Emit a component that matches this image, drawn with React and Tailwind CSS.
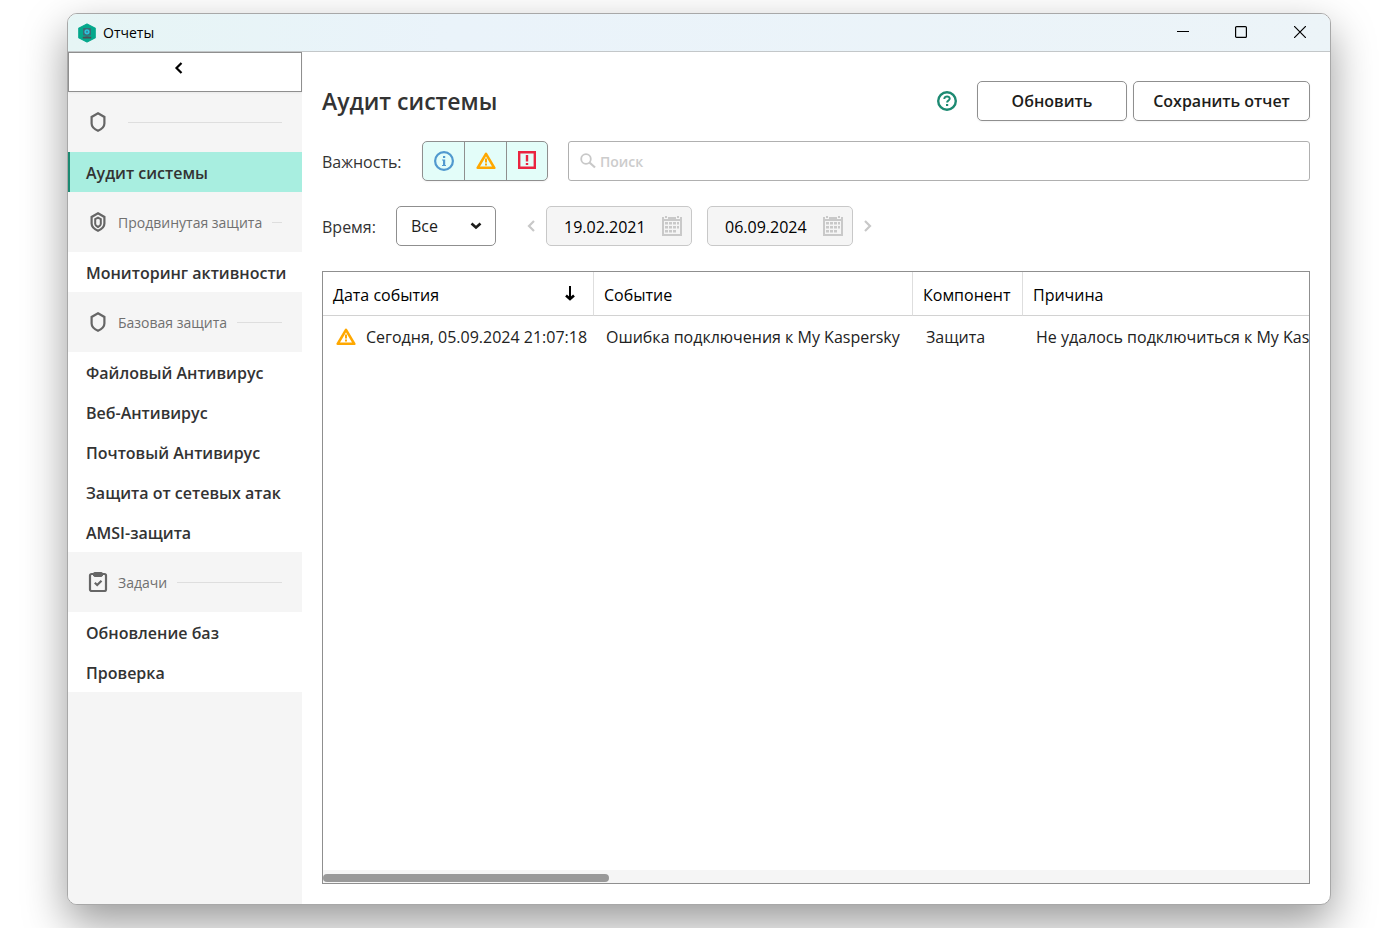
import { useState } from 'react'

const sections = [
  { icon: 'shield', title: '', items: ['Аудит системы'] },
  { icon: 'advanced', title: 'Продвинутая защита', items: ['Мониторинг активности'] },
  {
    icon: 'shield',
    title: 'Базовая защита',
    items: ['Файловый Антивирус', 'Веб-Антивирус', 'Почтовый Антивирус', 'Защита от сетевых атак', 'AMSI-защита'],
  },
  { icon: 'tasks', title: 'Задачи', items: ['Обновление баз', 'Проверка'] },
]

const events = [
  {
    date: 'Сегодня, 05.09.2024 21:07:18',
    event: 'Ошибка подключения к My Kaspersky',
    component: 'Защита',
    reason: 'Не удалось подключиться к My Kaspersky',
  },
]

function LogoIcon() {
  return (
    <svg width="20" height="20" viewBox="0 0 20 20" aria-hidden="true">
      <path d="M10 1 18.200 5.300v9.400L10 19l-8.200-4.300V5.300z" fill="#05a88c" stroke="#05a88c" strokeWidth="1.200" strokeLinejoin="round" />
      <rect x="6" y="5" width="8" height="7.500" rx="1" fill="#3c6b74" />
      <circle cx="10" cy="8.800" r="2.600" fill="#2cc5dc" />
      <circle cx="10" cy="8.800" r="1.100" fill="#3f7f95" />
      <path d="M8.500 12.500h3v1.200h-3z" fill="#3c6b74" />
      <path d="M5.800 13.700h8.400v1.800H5.800z" fill="#4d4f57" />
    </svg>
  )
}

function SectionIcon({ type }) {
  if (type === 'tasks') {
    return (
      <svg width="20" height="20" viewBox="0 0 20 20" fill="none" stroke="#666" className="shrink-0" aria-hidden="true">
        <rect x="2" y="2" width="16" height="17" rx="1.500" strokeWidth="2.200" />
        <path d="M5 1 6.500 0h7L15 1v2.500L13.500 5h-7L5 3.500z" fill="#666" stroke="none" />
        <path d="m6.800 10.800 2.400 2.200 4.300-4.200" strokeWidth="2.200" />
      </svg>
    )
  }
  return (
    <svg width="20" height="20" viewBox="0 0 20 20" fill="none" stroke="#666" className="shrink-0" aria-hidden="true">
      <path d="M10 1.300 16.400 5v6.500c0 3.300-2.600 5.600-6.400 7.300-3.800-1.700-6.400-4-6.400-7.300V5z" strokeWidth="2.200" />
      {type === 'advanced' && (
        <path d="M10 5.600 12.800 7.200v4.800c0 1.300-1.200 2.200-2.800 3-1.600-.8-2.800-1.700-2.800-3V7.200z" strokeWidth="2" />
      )}
    </svg>
  )
}

function InfoIcon() {
  return (
    <svg width="20" height="20" viewBox="0 0 20 20" fill="none" className="shrink-0" aria-hidden="true">
      <circle cx="10" cy="10" r="8.900" stroke="#5199cf" strokeWidth="2.200" />
      <path d="M9 5h2.200v2H9zM8 8.500h3.200V14H12v1H8v-1h1V9.500H8z" fill="#5199cf" />
    </svg>
  )
}

function WarningIcon() {
  return (
    <svg width="20" height="18" viewBox="0 0 20 18" fill="none" className="shrink-0" aria-hidden="true">
      <path d="M10 1.800 18.300 15.800H1.700z" stroke="#ffa800" strokeWidth="2.600" strokeLinejoin="round" />
      <path d="M9 6.500h2v4H9zM9 11.500h2v2H9z" fill="#ffa800" />
    </svg>
  )
}

function CriticalIcon() {
  return (
    <svg width="18" height="18" viewBox="0 0 18 18" fill="none" className="shrink-0" aria-hidden="true">
      <path d="M1.200 1.200h15.600v15.600H1.200z" stroke="#ea2440" strokeWidth="2.400" />
      <path d="M7.800 4h2.400v6.500H7.800zM7.800 12h2.400v2H7.800z" fill="#ea2440" />
    </svg>
  )
}

function CalendarIcon() {
  return (
    <svg width="20" height="20" viewBox="0 0 20 20" aria-hidden="true">
      <path d="M0 1h20v19H0z" fill="#c9c9c9" />
      <path d="M2 5h16v13H2z" fill="#f5f5f5" />
      <path d="M2 0h4v3H2zM14 0h4v3h-4z" fill="#f5f5f5" />
      <path d="M3 0h2v2H3zM15 0h2v2h-2z" fill="#c9c9c9" />
      <path
        d="M3 6h3v2.500H3zM7 6h3v2.500H7zM11 6h3v2.500h-3zM15 6h2v2.500h-2zM3 10h3v2.500H3zM7 10h3v2.500H7zM11 10h3v2.500h-3zM15 10h2v2.500h-2zM3 14h3v2.500H3zM7 14h3v2.500H7zM11 14h3v2.500h-3z"
        fill="#c9c9c9"
      />
    </svg>
  )
}

function Chevron({ d, className }) {
  return (
    <svg width="12" height="12" viewBox="0 0 12 12" fill="none" stroke="currentColor" strokeWidth="2.200" className={className} aria-hidden="true">
      <path d={d} />
    </svg>
  )
}

function DateField({ label, value }) {
  return (
    <div className="flex h-10 w-[146px] items-center rounded-[5px] border border-[#c8c8c8] bg-[#f5f5f5] pr-[9px] pl-[17px]">
      <input aria-label={label} defaultValue={value} className="w-0 flex-1 bg-transparent pt-0.5 text-base text-black outline-none" />
      <button aria-label="Открыть календарь" className="shrink-0">
        <CalendarIcon />
      </button>
    </div>
  )
}

function TitleBar() {
  return (
    <header className="flex h-[38px] shrink-0 items-center border-b border-[#c3c7c9] bg-gradient-to-r from-[#e6f5f5] via-[#eaf3fa] via-30% to-[#ecf4f8] pl-[9px]">
      <LogoIcon />
      <span className="ml-1.5 flex-1 text-sm text-black">Отчеты</span>
      <button aria-label="Свернуть" className="flex h-full w-[58px] items-center justify-center pb-0.5">
        <svg width="12" height="12" viewBox="0 0 12 12" stroke="#000"><path d="M0 5.500h12" /></svg>
      </button>
      <button aria-label="Развернуть" className="flex h-full w-[58px] items-center justify-center pb-0.5">
        <svg width="12" height="12" viewBox="0 0 12 12" fill="none" stroke="#000"><rect x=".6" y=".6" width="10.800" height="10.800" rx="1" strokeWidth="1.200" /></svg>
      </button>
      <button aria-label="Закрыть" className="flex h-full w-[60px] items-center justify-center pb-0.5">
        <svg width="12" height="12" viewBox="0 0 12 12" stroke="#000" strokeWidth="1.200"><path d="m0 0 12 12M12 0 0 12" /></svg>
      </button>
    </header>
  )
}

function Sidebar({ active, onSelect }) {
  return (
    <aside className="w-[234px] shrink-0 bg-[#f5f5f5]">
      <button aria-label="Свернуть меню" className="flex h-10 w-full items-start justify-center border border-[#8f8f8f] bg-white pt-[9px] pr-3 shadow-xs">
        <Chevron d="M8.500 1 3.500 6l5 5" className="text-black" />
      </button>
      <nav>
        {sections.map((section, i) => (
          <div key={i}>
            <div className="flex h-[60px] items-center gap-2.5 pr-5 pl-5">
              <SectionIcon type={section.icon} />
              <h2 className="pt-0.5 text-sm text-[#707070]">{section.title}</h2>
              <div className="h-px flex-1 bg-[#dedede]" />
            </div>
            {section.items.map((item) => (
              <button
                key={item}
                onClick={() => onSelect(item)}
                className={`flex h-10 w-full items-center border-l-2 pt-0.5 pl-4 text-base font-semibold whitespace-nowrap text-[#333] ${
                  active === item ? 'border-[#1d8a72] bg-[#a8eee0]' : 'border-white bg-white'
                }`}
              >
                {item}
              </button>
            ))}
          </div>
        ))}
      </nav>
    </aside>
  )
}

function EventsTable() {
  const th = 'border-b border-[#d2d2d2] pt-0.5 pl-2.5 text-left font-normal text-black'
  return (
    <div className="mt-[25px] flex min-h-0 flex-1 flex-col overflow-hidden border border-[#8f8f8f]">
      <div className="min-h-0 flex-1 overflow-hidden">
        <table className="w-[1400px] table-fixed border-separate border-spacing-0 text-base whitespace-nowrap">
          <colgroup>
            <col className="w-[271px]" />
            <col className="w-[319px]" />
            <col className="w-[110px]" />
            <col />
          </colgroup>
          <thead>
            <tr className="h-11">
              <th className={`${th} border-r border-r-[#dedede]`}>
                <div className="flex items-center justify-between pr-[17px]">
                  Дата события
                  <svg width="12" height="18" viewBox="0 0 12 18" fill="none" stroke="#000" aria-hidden="true">
                    <path d="M6 0v13" strokeWidth="2" />
                    <path d="M2 9.500 6 13l4-3.500" strokeWidth="2.600" />
                  </svg>
                </div>
              </th>
              <th className={`${th} border-r border-r-[#dedede]`}>Событие</th>
              <th className={`${th} border-r border-r-[#dedede]`}>Компонент</th>
              <th className={th}>Причина</th>
            </tr>
          </thead>
          <tbody>
            {events.map((row) => (
              <tr key={row.date} className="h-[42px] text-[#222]">
                <td className="pl-[13px]">
                  <div className="flex items-center gap-2.5">
                    <WarningIcon />
                    {row.date}
                  </div>
                </td>
                <td className="pl-3">{row.event}</td>
                <td className="pl-[13px]">{row.component}</td>
                <td className="pl-[13px]">{row.reason}</td>
              </tr>
            ))}
          </tbody>
        </table>
      </div>
      <div className="h-[13px] shrink-0 bg-[#f5f5f5] pt-1">
        <div className="h-2 w-[29%] rounded-full bg-[#999]" />
      </div>
    </div>
  )
}

export default function App() {
  const [active, setActive] = useState('Аудит системы')

  return (
    <div className="h-screen min-h-[800px] overflow-hidden bg-white pt-[13px] pr-[61px] pb-[23px] pl-[67px] font-['Open_Sans','Noto_Sans',sans-serif]">
      <div className="flex h-full flex-col overflow-hidden rounded-[10px] border border-[#a8a8a8] bg-white shadow-[0_18px_44px_rgba(0,0,0,0.4)]">
        <TitleBar />
        <div className="flex min-h-0 flex-1">
          <Sidebar active={active} onSelect={setActive} />

          <main className="flex min-w-0 flex-1 flex-col px-5 pt-[29px] pb-5">
            <div className="flex items-center">
              <h1 className="flex-1 text-[23px] font-semibold text-[#333]">{active}</h1>
              <button aria-label="Справка" className="mr-5">
                <svg width="20" height="20" viewBox="0 0 20 20" fill="none" stroke="#1d8a72" aria-hidden="true">
                  <circle cx="10" cy="10" r="8.800" strokeWidth="2.400" />
                  <path d="M7.300 8c0-3.500 5.600-3.200 5.400-.2-.1 1.700-2.600 1.800-2.600 3.700" strokeWidth="2" />
                  <path d="M9 13h2.200v2H9z" fill="#1d8a72" stroke="none" />
                </svg>
              </button>
              <button className="h-10 w-[150px] rounded-[5px] border border-[#8f8f8f] text-base font-semibold text-[#1d1d1b] shadow-xs">Обновить</button>
              <button className="ml-1.5 h-10 w-[177px] rounded-[5px] border border-[#8f8f8f] text-base font-semibold text-[#1d1d1b] shadow-xs">Сохранить отчет</button>
            </div>

            {/* Severity and search */}
            <div className="mt-5 flex items-center">
              <span className="w-[100px] pt-0.5 text-base text-[#333]">Важность:</span>
              <div className="flex h-10 w-[126px] divide-x divide-[#8f8f8f] overflow-hidden rounded-[5px] border border-[#8f8f8f] bg-[#e3fdf9] shadow-xs">
                <button aria-label="Информационные" className="flex w-[42px] items-center justify-center"><InfoIcon /></button>
                <button aria-label="Предупреждения" className="flex w-[42px] items-center justify-center"><WarningIcon /></button>
                <button aria-label="Критические" className="flex flex-1 items-center justify-center pb-0.5"><CriticalIcon /></button>
              </div>
              <div className="ml-5 flex h-10 flex-1 items-center gap-1 rounded-[3px] border border-[#b0b0b0] pl-[11px]">
                <svg width="16" height="16" viewBox="0 0 16 16" fill="none" stroke="#c8c8c8" aria-hidden="true">
                  <circle cx="6" cy="6" r="4.800" strokeWidth="1.800" />
                  <path d="m9.500 9.500 5.500 5" strokeWidth="2.200" />
                </svg>
                <input aria-label="Поиск" placeholder="Поиск" className="flex-1 pt-0.5 text-sm font-semibold outline-none placeholder:text-[#ccc]" />
              </div>
            </div>

            {/* Period */}
            <div className="mt-[25px] flex items-center">
              <label htmlFor="period" className="w-[74px] pt-0.5 text-base text-[#333]">Время:</label>
              <div className="relative">
                <select id="period" className="h-10 w-[100px] appearance-none rounded-[5px] border border-[#8f8f8f] bg-white pl-3.5 text-base text-[#1d1d1b]">
                  <option>Все</option>
                </select>
                <svg width="12" height="8" viewBox="0 0 12 8" fill="none" stroke="#1d1d1b" strokeWidth="2.600" className="pointer-events-none absolute top-4 right-3.5" aria-hidden="true">
                  <path d="m1.500 1.500 4.500 4 4.500-4" />
                </svg>
              </div>
              <button aria-label="Предыдущий период" className="mr-[9px] ml-[29px] text-[#c8c8c8]"><Chevron d="M9 1 4 6l5 5" /></button>
              <DateField label="Начало периода" value="19.02.2021" />
              <div className="w-[15px]" />
              <DateField label="Конец периода" value="06.09.2024" />
              <button aria-label="Следующий период" className="ml-[9px] text-[#c8c8c8]"><Chevron d="m3 1 5 5-5 5" /></button>
            </div>

            <EventsTable />
          </main>
        </div>
      </div>
    </div>
  )
}
